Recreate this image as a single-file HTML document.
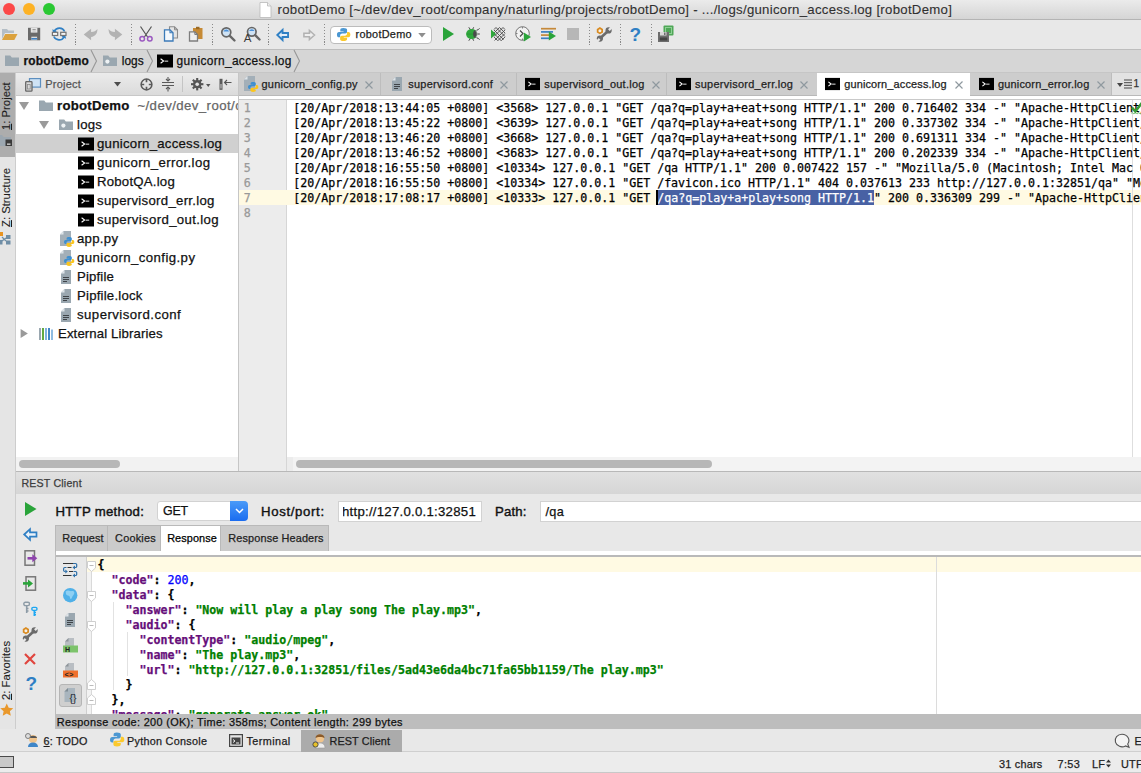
<!DOCTYPE html>
<html>
<head>
<meta charset="utf-8">
<title>robotDemo</title>
<style>
*{box-sizing:border-box;margin:0;padding:0}
html,body{width:1141px;height:773px;overflow:hidden;background:#ececec}
body{font-family:"Liberation Sans",sans-serif;font-size:13px;color:#1d1d1d;position:relative;-webkit-text-stroke:0.25px}
.abs{position:absolute}
.nw{white-space:nowrap}
.mono{font-family:"DejaVu Sans Mono","Liberation Mono",monospace}
svg{position:absolute;overflow:visible}
#titlebar{left:0;top:0;width:1141px;height:20px;background:linear-gradient(#ebebeb,#d5d5d5);border-bottom:1px solid #b4b4b4}
.tl{position:absolute;top:3px;width:12px;height:12px;border-radius:50%}
#title{left:277.500px;top:1.800px;font-size:14px;line-height:15px;color:#303030;white-space:nowrap;-webkit-text-stroke:0.1px}
#toolbar{left:0;top:20px;width:1141px;height:30px;background:#e8e8e8;border-bottom:1px solid #bdbdbd}
.sep{position:absolute;top:3.500px;width:1.200px;height:22px;background:repeating-linear-gradient(#8a8a8a 0,#8a8a8a 1.100px,transparent 1.100px,transparent 2.900px)}
#navbar{left:0;top:50px;width:1141px;height:23px;background:#d6d6d6;border-bottom:1px solid #c6c6c6;font-size:14px}
#leftstrip{left:0;top:73px;width:16px;height:656px;background:#e5e5e5;border-right:1px solid #cdcdcd}
#projhead{left:16px;top:73px;width:222px;height:23px;background:linear-gradient(#ebebeb,#dbdbdb);border-bottom:1px solid #c8c8c8}
#tree{left:16px;top:96px;width:222px;height:361px;background:#fff;overflow:hidden}
#projscroll{left:16px;top:457px;width:222px;height:14px;background:#f2f2f2}
#vsplit{left:238px;top:73px;width:1px;height:398px;background:#c6c6c6}
#tabs{left:240px;top:73px;width:901px;height:24px;background:#d4d4d4;border-bottom:1px solid #b9b9b9}
#gutter{left:240px;top:97px;width:48px;height:374px;background:#f0f0f0;border-right:1px solid #d9d9d9}
#editor{left:288px;top:97px;width:853px;height:360px;background:#fff;overflow:hidden}
#edscroll{left:293px;top:457px;width:848px;height:14px;background:#f3f3f3}
#resthead{left:16px;top:471px;width:1125px;height:23px;background:linear-gradient(#dcdcdc,#cfcfcf);border-top:1px solid #b5b5b5;border-bottom:1px solid #bcbcbc}
#restbody{left:16px;top:494px;width:1125px;height:235px;background:#e8e8e8}
#bottomstrip{left:0;top:729px;width:1141px;height:23px;background:#e8e8e8;border-top:1px solid #c4c4c4;border-bottom:1px solid #c9c9c9}
#statusbar{left:0;top:752px;width:1141px;height:21px;background:#ececec}
</style>
</head>
<body>
<svg width="0" height="0" style="position:absolute">
<defs>
  <symbol id="i-folder" viewBox="0 0 16 16"><path d="M1 2.5h5.2l1.6 2H15V13H1z" fill="#9aa7b0"/></symbol>
  <symbol id="i-folderdot" viewBox="0 0 16 16"><path d="M1 2.5h5.2l1.6 2H15V13H1z" fill="#9aa7b0"/><circle cx="5.4" cy="8.600" r="2.100" fill="#eef2f4"/></symbol>
  <symbol id="i-term" viewBox="0 0 16 16"><rect x="0" y="1.5" width="16" height="13" fill="#000"/><path d="M3.6 5.8l3 2.2-3 2.2" stroke="#fff" stroke-width="1.1" fill="none"/><rect x="7.6" y="7.6" width="3.6" height="1.1" fill="#d8d8d8"/></symbol>
  <symbol id="i-py" viewBox="0 0 16 16"><path d="M3.500 0H11V15H0V3.500z" fill="#a3afb8"/><path d="M3.500 0V3.500H0z" fill="#dfe5e9"/><g transform="translate(3.300,5.200) scale(0.72)"><path d="M7.800 1C5.500 1 4.600 1.800 4.600 3v1.800h3.500v.6H3.200C1.800 5.400 1 6.500 1 8.200s.8 2.800 2.200 2.800h1.200V9.200c0-1.300 1-2.300 2.300-2.300h3.300c1 0 1.800-.8 1.800-1.800V3c0-1.200-1.200-2-4-2z" fill="#3e8fd0"/><path d="M11.800 5.200v1.700c0 1.400-1 2.400-2.300 2.400H6.200c-1 0-1.800.8-1.800 1.800V13c0 1.200 1.200 2 3.600 2s3.800-.8 3.800-2v-1.600H8.300v-.6h5c1.300 0 2-1.100 2-2.800s-.7-2.800-2-2.800z" fill="#fbc51c"/></g></symbol>
  <symbol id="i-txt" viewBox="0 0 16 16"><path d="M6.500 1H13V15H3V4.500z" fill="#9aa7b0"/><path d="M6.500 1V4.500H3z" fill="#dfe5e9"/><path d="M5 8.500h6M5 10.500h6M5 12.500h4" stroke="#3f4449" stroke-width="1"/></symbol>
</defs>
</svg>
<div id="titlebar" class="abs">
  <div class="tl" style="left:3px;background:#fc4948"></div>
  <div class="tl" style="left:23px;background:#fdb225"></div>
  <div class="tl" style="left:43px;background:#2ac833"></div>
  <svg style="left:259px;top:2px" width="13" height="16" viewBox="0 0 13 16"><path d="M1 .5h7.500l3.500 3.500V15.500H1z" fill="#fff" stroke="#b9b9b9" stroke-width=".8"/><path d="M8.500.5v3.500H12" fill="#eee" stroke="#b9b9b9" stroke-width=".8"/></svg>
  <div id="title" class="abs">robotDemo [~/dev/dev_root/company/naturling/projects/robotDemo] - .../logs/gunicorn_access.log [robotDemo]</div>
</div>
<style>
#title{font-size:13.20px!important;letter-spacing:0.282px!important}
#cmb{font-size:10.90px!important;letter-spacing:0.281px!important}
#nv1{font-size:11.90px!important;letter-spacing:0.231px!important}
#nv2{font-size:11.90px!important;letter-spacing:0.068px!important}
#nv3{font-size:11.90px!important;letter-spacing:0.352px!important}
#projlbl{font-size:11.00px!important;letter-spacing:0.221px!important}
#tr0{font-size:13.20px!important;letter-spacing:0.251px!important}
#tl1{font-size:13.20px!important;letter-spacing:0.249px!important}
#tl2{font-size:13.20px!important;letter-spacing:0.256px!important}
#tl3{font-size:13.20px!important;letter-spacing:0.394px!important}
#tl4{font-size:13.20px!important;letter-spacing:0.226px!important}
#tl5{font-size:13.20px!important;letter-spacing:0.292px!important}
#tl6{font-size:13.20px!important;letter-spacing:0.363px!important}
#tl7{font-size:13.20px!important;letter-spacing:0.282px!important}
#tl8{font-size:13.20px!important;letter-spacing:0.428px!important}
#tl9{font-size:13.20px!important;letter-spacing:0.154px!important}
#tl10{font-size:13.20px!important;letter-spacing:0.213px!important}
#tl11{font-size:13.20px!important;letter-spacing:0.465px!important}
#tl12{font-size:13.20px!important;letter-spacing:0.110px!important}
#tb1{font-size:10.95px!important;letter-spacing:0.243px!important}
#tb2{font-size:10.95px!important;letter-spacing:0.297px!important}
#tb3{font-size:10.95px!important;letter-spacing:0.260px!important}
#tb4{font-size:10.95px!important;letter-spacing:0.272px!important}
#tb5{font-size:10.95px!important;letter-spacing:0.152px!important}
#tb6{font-size:10.95px!important;letter-spacing:0.174px!important}
#rhl{font-size:10.60px!important;letter-spacing:0.210px!important}
#fl1{font-size:13.20px!important;letter-spacing:0.257px!important}
#fget{font-size:12.40px!important;letter-spacing:-0.161px!important}
#fl2{font-size:13.20px!important;letter-spacing:0.653px!important}
#fl3{font-size:13.20px!important;letter-spacing:0.141px!important}
#fpath{font-size:12.70px!important;letter-spacing:0.286px!important}
#bt1{font-size:10.80px!important;letter-spacing:0.196px!important}
#bt2{font-size:10.80px!important;letter-spacing:0.283px!important}
#bt3{font-size:10.80px!important;letter-spacing:0.423px!important}
#bt4{font-size:10.80px!important;letter-spacing:0.126px!important}
#st1{font-size:10.90px!important;letter-spacing:0.215px!important}
#st2{font-size:10.90px!important;letter-spacing:0.374px!important}
#st3{font-size:10.90px!important;letter-spacing:0.241px!important}
#rstat{font-size:10.90px!important;letter-spacing:0.342px!important}
#rt1{font-size:10.90px!important;letter-spacing:0.117px!important}
#rt2{font-size:10.90px!important;letter-spacing:0.206px!important}
#rt3{font-size:10.90px!important;letter-spacing:0.082px!important}
#rt4{font-size:10.90px!important;letter-spacing:0.129px!important}
#tr0b{font-size:13.20px!important;letter-spacing:0.434px!important}
</style>
<div id="toolbar" class="abs">
  <!-- open -->
  <svg style="left:2px;top:6px" width="16" height="16" viewBox="0 0 16 16"><path d="M0 3h5l1.300 1.600H12V7H3L0 13z" fill="#b4bec6"/><path d="M3.200 8H15.500l-3.200 6H0z" fill="#dba23e"/></svg>
  <!-- save -->
  <svg style="left:27px;top:6px" width="16" height="16" viewBox="0 0 16 16"><path d="M1 1.800h12.200v12.500H1z" fill="#6a6a6a"/><rect x="3.800" y="1.800" width="6.600" height="4.800" fill="#e4e4e4"/><rect x="5.500" y="3" width="3.200" height="1" fill="#9a9a9a"/><rect x="5.500" y="4.600" width="3.200" height=".800" fill="#b5b5b5"/><rect x="4.300" y="10.700" width="5.800" height="3.600" fill="#dcdcdc"/><rect x="4.300" y="12" width="5.800" height="1.600" fill="#3d7fc1"/></svg>
  <!-- sync -->
  <svg style="left:51px;top:6px" width="16" height="16" viewBox="0 0 16 16"><path d="M3.300 5.200A5.700 5.700 0 0 1 13.600 5.500" stroke="#2f7fc4" stroke-width="1.600" fill="none"/><path d="M1.300 3.200l1 4.200 3.600-2.200z" fill="#2f7fc4"/><path d="M13.100 10.800A5.700 5.700 0 0 1 2.800 10.500" stroke="#2f7fc4" stroke-width="1.600" fill="none"/><path d="M15.100 12.800l-1-4.200-3.600 2.200z" fill="#2f7fc4"/><rect x="1.400" y="6.300" width="5.300" height="3.200" fill="#f4f4f4" stroke="#737373" stroke-width="1.200"/><rect x="9.700" y="6.300" width="5.300" height="3.200" fill="#f4f4f4" stroke="#737373" stroke-width="1.200"/></svg>
  <div class="sep" style="left:75px"></div>
  <!-- undo -->
  <svg style="left:83px;top:6px" width="16" height="16" viewBox="0 0 16 16"><path d="M.700 8.500L8.100 2.800V6C11 6 13 5 14.400 3 14.600 7 12.500 10.500 8.100 11V14.200z" fill="#b3b3b3"/></svg>
  <!-- redo -->
  <svg style="left:107px;top:6px" width="16" height="16" viewBox="0 0 16 16"><g transform="translate(16,0) scale(-1,1)"><path d="M.700 8.500L8.100 2.800V6C11 6 13 5 14.400 3 14.600 7 12.500 10.500 8.100 11V14.200z" fill="#b3b3b3"/></g></svg>
  <div class="sep" style="left:131px"></div>
  <!-- cut -->
  <svg style="left:138px;top:6px" width="16" height="16" viewBox="0 0 16 16"><path d="M2.500.500L9.600 11M13.500.500L6.400 11" stroke="#555" stroke-width="1.200" fill="none"/><circle cx="4.200" cy="12.800" r="2.300" fill="none" stroke="#9b59c0" stroke-width="1.500"/><circle cx="11.800" cy="12.800" r="2.300" fill="none" stroke="#9b59c0" stroke-width="1.500"/></svg>
  <!-- copy -->
  <svg style="left:163px;top:6px" width="16" height="16" viewBox="0 0 16 16"><path d="M6.500.800h5l3 3V12H6.500z" fill="#e4e4e4" stroke="#8a8a8a" stroke-width="1.100"/><path d="M11.500.800v3h3" fill="none" stroke="#8a8a8a" stroke-width="1"/><path d="M1.500 3.800h5.500l3 3V15H1.500z" fill="#f4f8fc" stroke="#3b7ab8" stroke-width="1.300"/><path d="M7 3.800v3h3" fill="none" stroke="#3b7ab8" stroke-width="1.100"/></svg>
  <!-- paste -->
  <svg style="left:188px;top:6px" width="16" height="16" viewBox="0 0 16 16"><path d="M5 2h9.500v11H5z" fill="#c68a35"/><rect x="8" y=".800" width="3.500" height="2.400" fill="#9a6a25"/><path d="M1.500 5.800h5.300l2.700 2.700V15H1.500z" fill="#efefef" stroke="#7d7d7d" stroke-width="1.300"/><path d="M6.800 5.800v2.700h2.700" fill="none" stroke="#7d7d7d" stroke-width="1"/></svg>
  <div class="sep" style="left:211.700px"></div>
  <!-- find -->
  <svg style="left:220px;top:6px" width="16" height="16" viewBox="0 0 16 16"><circle cx="6.300" cy="6.300" r="4.500" fill="#cfe2f3" stroke="#666" stroke-width="1.700"/><path d="M3.500 5.500a3 3 0 0 1 5.600 0z" fill="#4a90d9"/><path d="M9.800 9.800L14.500 14.500" stroke="#666" stroke-width="2.400" stroke-linecap="round"/></svg>
  <!-- replace -->
  <svg style="left:244px;top:6px" width="17" height="16" viewBox="0 0 17 16"><circle cx="7.800" cy="5.800" r="4.300" fill="#cfe2f3" stroke="#666" stroke-width="1.700"/><path d="M5.100 5a3 3 0 0 1 5.400 0z" fill="#4a90d9"/><path d="M11.200 9.200L15.500 13.500" stroke="#666" stroke-width="2.400" stroke-linecap="round"/><text x="-0.300" y="16" font-family="Liberation Sans,sans-serif" font-size="11.500" fill="#3a3a3a" style="-webkit-text-stroke:0">A</text></svg>
  <div class="sep" style="left:267.700px"></div>
  <!-- back -->
  <svg style="left:276px;top:7.500px" width="14" height="14" viewBox="0 0 16 16"><path d="M1.500 8L7.500 2.300V5.700H13.800V10.300H7.500V13.700z" fill="#e4eef8" stroke="#2f7fc4" stroke-width="2.100" stroke-linejoin="miter"/></svg>
  <!-- forward -->
  <svg style="left:301.500px;top:7.500px" width="14" height="14" viewBox="0 0 16 16"><path d="M14.300 8L8.500 2.800V6H2.200V10H8.500V13.200z" fill="#efefef" stroke="#b2b2b2" stroke-width="1.800"/></svg>
  <div class="sep" style="left:323.800px"></div>
  <!-- combo -->
  <div class="abs" style="left:329.500px;top:5.500px;width:102px;height:18.500px;background:#fff;border:1px solid #bcbcbc;border-radius:4px"></div>
  <svg style="left:335.500px;top:7px" width="15" height="15" viewBox="0 0 16 16"><path d="M7.800 1C5.500 1 4.600 1.800 4.600 3v1.800h3.500v.6H3.200C1.800 5.400 1 6.500 1 8.200s.8 2.800 2.200 2.800h1.200V9.200c0-1.300 1-2.300 2.300-2.300h3.300c1 0 1.800-.8 1.800-1.800V3c0-1.200-1.200-2-4-2z" fill="#4b97d2"/><path d="M11.800 5.200v1.700c0 1.400-1 2.400-2.300 2.400H6.200c-1 0-1.800.8-1.800 1.800V13c0 1.200 1.200 2 3.600 2s3.800-.8 3.800-2v-1.600H8.300v-.6h5c1.300 0 2-1.100 2-2.800s-.7-2.800-2-2.800z" fill="#fbc92d"/></svg>
  <div class="abs nw" id="cmb" style="left:355.500px;top:8px;line-height:13px;font-size:12px;color:#1d1d1d">robotDemo</div>
  <svg style="left:417.500px;top:13px" width="8" height="5" viewBox="0 0 9 6"><path d="M0 0h9L4.500 5.500z" fill="#8e8e8e"/></svg>
  <!-- run -->
  <svg style="left:440px;top:6px" width="16" height="16" viewBox="0 0 16 16"><path d="M3 1l11 7-11 7z" fill="#2aa43a"/></svg>
  <!-- debug -->
  <svg style="left:465px;top:6px" width="16" height="16" viewBox="0 0 16 16"><path d="M3.800 1.300l1.800 2.500M8.700 1.300L7.500 3.500M3.800 14.700l1.800-2.500M8.700 14.700L7.500 12.500" stroke="#444" stroke-width="1" fill="none"/><path d="M11.500 4.300c1.500-.3 2.500-1 3-2M11.500 11.700c1.500.3 2.500 1 3 2M12 8h2.800" stroke="#444" stroke-width="1" fill="none"/><ellipse cx="6.700" cy="8.100" rx="5.600" ry="5" fill="#2fa73c"/><path d="M1.500 8.100h7" stroke="#258c31" stroke-width=".6"/><path d="M10 4.100a5 5 0 0 1 0 8c-1.300-1-1.900-2.400-1.900-4s.6-3 1.900-4z" fill="#4a4a4a"/><path d="M11 5.200a4 4 0 0 1 0 5.800" stroke="#bbb" stroke-width=".8" fill="none"/></svg>
  <!-- coverage -->
  <svg style="left:489px;top:6px" width="17" height="16" viewBox="0 0 17 16"><path d="M5 1.500h11v7.500c0 3-2.500 5-5.500 6-3-1-5.500-3-5.500-6z" fill="#e2e2e2"/><g stroke="#4d4d4d" stroke-width=".9"><path d="M5 4l9.500 9.500M5 7.500l7.500 7.500M5 11l3.500 3.500M7 1.500l9 9M10.500 1.500l5.500 5.500M14 1.500l2 2"/><path d="M16 4l-10.500 10.500M16 7.500l-7.500 7.500M16 11l-3.500 3.500M14 1.500l-9 9M10.500 1.500l-5.500 5.500M7 1.500l-2 2"/></g><path d="M2 3.500L7 8 2 12.500z" fill="#2fa73c"/></svg>
  <!-- profile -->
  <svg style="left:515px;top:6px" width="17" height="16" viewBox="0 0 17 16"><circle cx="7.500" cy="7.500" r="6.800" fill="#f2f2f2" stroke="#666" stroke-width=".9"/><path d="M7.500 1v1.500M1 7.500h1.500M7.500 14v-1.500" stroke="#666" stroke-width=".8"/><path d="M5 4.500l3 3-3 3" stroke="#444" stroke-width="1.100" fill="none"/><path d="M8.800 6.500L16 11l-7.200 4.500z" fill="#2aa43a"/></svg>
  <!-- concurrency -->
  <svg style="left:540px;top:6px" width="17" height="16" viewBox="0 0 17 16"><path d="M1 2.700h15" stroke="#c5893a" stroke-width="1.700"/><path d="M1 5.900h12" stroke="#3d7fc1" stroke-width="1.700"/><path d="M1 9.100h8" stroke="#c5893a" stroke-width="1.700"/><path d="M1 12.300h8" stroke="#3d7fc1" stroke-width="1.700"/><path d="M8.800 5.500L16 10l-7.200 4.500z" fill="#2aa43a"/></svg>
  <!-- stop -->
  <div class="abs" style="left:567px;top:8px;width:12px;height:12px;background:#b7b7b7"></div>
  <div class="sep" style="left:589px"></div>
  <!-- wrench -->
  <svg style="left:596px;top:6px" width="16" height="16" viewBox="0 0 16 16"><path d="M4.200 12.300L12.300 4.700" stroke="#6b6b6b" stroke-width="2.600"/><circle cx="12.600" cy="4.400" r="3.100" fill="#6b6b6b"/><path d="M12.900 4.100L16.500.500" stroke="#e8e8e8" stroke-width="2.300"/><circle cx="3.900" cy="12.600" r="3.100" fill="#6b6b6b"/><path d="M3.600 12.900L0 16.500" stroke="#e8e8e8" stroke-width="2.300"/><path d="M3.900 1.100l3.100 1.800v3.600l-3.100 1.800-3.100-1.800V2.900z" fill="#d98a1f"/><circle cx="3.900" cy="4.700" r="1.500" fill="#f3f0ea"/></svg>
  <div class="sep" style="left:620px"></div>
  <!-- help -->
  <div class="abs nw" style="left:629.500px;top:3px;font-size:19px;font-weight:bold;color:#2f7fc4;line-height:24px;-webkit-text-stroke:0">?</div>
  <div class="sep" style="left:651px"></div>
  <!-- project structure -->
  <svg style="left:657px;top:5px" width="18" height="18" viewBox="0 0 18 18"><rect x="6.500" y=".500" width="10" height="10" rx="1" fill="#4fa757"/><rect x="8.500" y="2.500" width="6" height="6" fill="none" stroke="#8fd095" stroke-width="1"/><path d="M1 7h11v10H1z" fill="#6d6d6d"/><rect x="3" y="7" width="6.500" height="3.500" fill="#d8d8d8"/><rect x="7" y="7.500" width="1.500" height="2.500" fill="#6d6d6d"/><rect x="2.800" y="12.500" width="7.500" height="3" fill="#444"/></svg>
</div>
<div id="navbar" class="abs">
  <svg style="left:4px;top:3px" width="16" height="16"><use href="#i-folder"/></svg>
  <div class="abs nw" id="nv1" style="left:23.500px;top:4px;font-weight:bold;color:#111">robotDemo</div>
  <svg style="left:90px;top:0" width="8" height="22" viewBox="0 0 8 23" preserveAspectRatio="none"><path d="M1 0l5.500 11.500L1 23" stroke="#979797" stroke-width="1.100" fill="none"/></svg>
  <svg style="left:102px;top:3px" width="16" height="16"><use href="#i-folderdot"/></svg>
  <div class="abs nw" id="nv2" style="left:121.700px;top:4px;color:#111">logs</div>
  <svg style="left:146px;top:0" width="8" height="22" viewBox="0 0 8 23" preserveAspectRatio="none"><path d="M1 0l5.500 11.500L1 23" stroke="#979797" stroke-width="1.100" fill="none"/></svg>
  <svg style="left:157px;top:3px" width="16" height="16"><use href="#i-term"/></svg>
  <div class="abs nw" id="nv3" style="left:176.500px;top:4px;color:#111">gunicorn_access.log</div>
  <svg style="left:293px;top:0" width="8" height="22" viewBox="0 0 8 23" preserveAspectRatio="none"><path d="M1 0l5.500 11.500L1 23" stroke="#979797" stroke-width="1.100" fill="none"/></svg>
</div>
<style>
.vtab{position:absolute;left:0;width:15px;font-size:11.300px;color:#1d1d1d}
.vtext{position:absolute;left:-1.200px;-webkit-text-stroke:0.1px;white-space:nowrap;transform-origin:0 0;transform:rotate(-90deg);line-height:15px;height:15px}
.row{position:absolute;left:0;width:222px;height:19px}
.row .lbl{position:absolute;top:1.200px;font-size:14px;line-height:17px;white-space:nowrap;color:#111;}
.row svg{top:1px}
.hdric{stroke:#5a5a5a;fill:none}
</style>
<div id="leftstrip" class="abs">
  <div class="vtab" style="top:-0.500px;height:84px;background:#adadad">
    <div class="vtext" id="vt1" style="top:57.500px"><u>1</u>: Project</div>
    <svg style="left:-3px;top:61.500px" width="16" height="13" viewBox="0 0 16 13"><path d="M0 1h5l1.500 2H14v9H0z" fill="#97a5b1" opacity=".75"/><rect x="8.500" y="5.500" width="6.500" height="6.500" fill="#3a3a3a"/><rect x="10" y="9.500" width="3.500" height="1.300" fill="#d8d8d8"/></svg>
  </div>
  <div class="vtab" style="top:88px;height:90px">
    <div class="vtext" id="vt2" style="top:65.500px"><u>Z</u>: Structure</div>
    <svg style="left:-2px;top:70.500px" width="14" height="13" viewBox="0 0 14 13"><rect x="0" y="0" width="5" height="4" fill="#e8931f"/><rect x="0" y="8" width="4.500" height="4.500" fill="#6f8ea6"/><rect x="8" y="3" width="4.500" height="4" fill="#6f8ea6"/><rect x="8" y="8.500" width="4.500" height="4" fill="#6f8ea6"/><path d="M4 5l4 4M8 6l-4 3" stroke="#6f8ea6" stroke-width="1.200"/></svg>
  </div>
  <div class="vtab" style="top:560px;height:96px">
    <div class="vtext" id="vt3" style="top:66.500px"><u>2</u>: Favorites</div>
    <svg style="left:-0.500px;top:70px" width="13.500" height="13.500" viewBox="0 0 16 16"><path d="M8 .500l2.300 5 5.400.600-4 3.700 1.100 5.400L8 12.500 3.200 15.200l1.100-5.400-4-3.700 5.400-.600z" fill="#e9982b"/></svg>
  </div>
</div>
<div id="projhead" class="abs">
  <svg style="left:9px;top:5px" width="16" height="14" viewBox="0 0 16 14"><rect x="4.500" y=".600" width="11" height="8.500" fill="#cfe3f5" stroke="#5d8fbf" stroke-width="1.200"/><rect x=".700" y="3.700" width="6.300" height="9.500" rx=".800" fill="#d9d9d9" stroke="#666" stroke-width="1.300"/><rect x="2.500" y="6.500" width="2.700" height="4.500" fill="none" stroke="#8a8a8a" stroke-width=".8"/></svg>
  <div class="abs nw" style="left:29.200px;top:5px;font-size:13px;color:#555" id="projlbl">Project</div>
  <svg style="left:98px;top:9px" width="7" height="5" viewBox="0 0 7 5"><path d="M0 0h7L3.500 4.500z" fill="#4d4d4d"/></svg>
  <svg style="left:124px;top:5px" width="13" height="13" viewBox="0 0 13 13" class="hdric"><circle cx="6.500" cy="6.500" r="5.400" stroke-width="1.500"/><path d="M6.500 1v3.200M6.500 8.800v3.200M1 6.500h3.200M8.800 6.500h3.200" stroke-width="1.700"/></svg>
  <svg style="left:146px;top:4px" width="12" height="15" viewBox="0 0 12 15" class="hdric"><path d="M0 5.500h12M0 8.500h12" stroke-width="1"/><path d="M6 0v4M6 10v4.500" stroke-width="1.100"/><path d="M4 2l2 2 2-2M4 12l2-2 2 2" stroke-width="1.100"/></svg>
  <div class="abs" style="left:166px;top:3px;width:1px;height:16px;background:#c4c4c4"></div>
  <svg style="left:175px;top:5px" width="12.400" height="12.400" viewBox="0 0 13 13"><g fill="#555"><circle cx="6.500" cy="6.500" r="4.300"/><g id="gt"><rect x="5.400" y="0" width="2.200" height="13"/></g><use href="#gt" transform="rotate(45 6.500 6.500)"/><use href="#gt" transform="rotate(90 6.500 6.500)"/><use href="#gt" transform="rotate(135 6.500 6.500)"/></g><circle cx="6.500" cy="6.500" r="1.900" fill="#e1e1e1"/></svg>
  <svg style="left:189.500px;top:10.500px" width="4.500" height="3.500" viewBox="0 0 5 4"><path d="M0 0h5L2.500 3.500z" fill="#555"/></svg>
  <svg style="left:202.800px;top:5px" width="13" height="13" viewBox="0 0 13 13"><rect x=".500" y=".800" width="3" height="11" fill="#5a5a5a"/><rect x="1.500" y="6" width="1" height="4.500" fill="#d0d0d0"/><path d="M12.500 4.500H5.500M8 2L5.500 4.500 8 7" stroke="#555" stroke-width="1.100" fill="none"/></svg>
</div>
<div id="tree" class="abs">
  <div class="row" style="top:0">
    <svg style="left:3px;top:6px" width="10" height="8" viewBox="0 0 10 8"><path d="M0 0h10L5 8z" fill="#9a9a9a"/></svg>
    <svg style="left:22px;top:2px" width="16" height="16"><use href="#i-folder"/></svg>
    <div class="lbl" style="left:41px;font-weight:bold" id="tr0">robotDemo</div>
    <div class="lbl" style="left:121.400px;color:#666;font-size:13.200px;letter-spacing:0.434px" id="tr0c"><span id="tr0b">~/dev/dev_root</span>/company/naturling</div>
  </div>
  <div class="row" style="top:19px">
    <svg style="left:23px;top:6px" width="10" height="8" viewBox="0 0 10 8"><path d="M0 0h10L5 8z" fill="#9a9a9a"/></svg>
    <svg style="left:42px;top:2px" width="16" height="16"><use href="#i-folderdot"/></svg>
    <div class="lbl" id="tl1" style="left:61px">logs</div>
  </div>
  <div class="row" style="top:38px;background:#d0d0d0">
    <svg style="left:62px;top:2px" width="16" height="16"><use href="#i-term"/></svg>
    <div class="lbl" id="tl2" style="left:81px">gunicorn_access.log</div>
  </div>
  <div class="row" style="top:57px">
    <svg style="left:62px;top:2px" width="16" height="16"><use href="#i-term"/></svg>
    <div class="lbl" id="tl3" style="left:81px">gunicorn_error.log</div>
  </div>
  <div class="row" style="top:76px">
    <svg style="left:62px;top:2px" width="16" height="16"><use href="#i-term"/></svg>
    <div class="lbl" id="tl4" style="left:81px">RobotQA.log</div>
  </div>
  <div class="row" style="top:95px">
    <svg style="left:62px;top:2px" width="16" height="16"><use href="#i-term"/></svg>
    <div class="lbl" id="tl5" style="left:81px">supervisord_err.log</div>
  </div>
  <div class="row" style="top:114px">
    <svg style="left:62px;top:2px" width="16" height="16"><use href="#i-term"/></svg>
    <div class="lbl" id="tl6" style="left:81px">supervisord_out.log</div>
  </div>
  <div class="row" style="top:133px">
    <svg style="left:43.700px;top:2px" width="16" height="16"><use href="#i-py"/></svg>
    <div class="lbl" id="tl7" style="left:61px">app.py</div>
  </div>
  <div class="row" style="top:152px">
    <svg style="left:43.700px;top:2px" width="16" height="16"><use href="#i-py"/></svg>
    <div class="lbl" id="tl8" style="left:61px">gunicorn_config.py</div>
  </div>
  <div class="row" style="top:171px">
    <svg style="left:42.200px;top:2px" width="16" height="16"><use href="#i-txt"/></svg>
    <div class="lbl" id="tl9" style="left:61px">Pipfile</div>
  </div>
  <div class="row" style="top:190px">
    <svg style="left:42.200px;top:2px" width="16" height="16"><use href="#i-txt"/></svg>
    <div class="lbl" id="tl10" style="left:61px">Pipfile.lock</div>
  </div>
  <div class="row" style="top:209px">
    <svg style="left:42.200px;top:2px" width="16" height="16"><use href="#i-txt"/></svg>
    <div class="lbl" id="tl11" style="left:61px">supervisord.conf</div>
  </div>
  <div class="row" style="top:228px">
    <svg style="left:4px;top:5px" width="8.500" height="9" viewBox="0 0 8 10"><path d="M0 0v10l8-5z" fill="#9a9a9a"/></svg>
    <svg style="left:23px;top:3.500px" width="15" height="12" viewBox="0 0 15 12"><rect x="0" y="0" width="2" height="12" fill="#9aa7b0"/><rect x="3" y="0" width="2" height="12" fill="#62a940"/><rect x="6" y="0" width="2" height="12" fill="#7fb2dd"/><rect x="9" y="0" width="2" height="12" fill="#3f86c6"/><rect x="12" y="1.500" width="2" height="10.500" fill="#8fbce2"/></svg>
    <div class="lbl" id="tl12" style="left:42px">External Libraries</div>
  </div>
</div>
<div id="projscroll" class="abs"><div class="abs" style="left:3px;top:3px;width:101px;height:8px;border-radius:4px;background:#b7b7b7"></div></div>
<div id="vsplit" class="abs"></div>
<style>
#tabs{left:239px;top:73px;width:902px;height:27px;background:#fff;border:0}
#tabs .bar{position:absolute;left:0;top:0;width:902px;height:23px;background:#cdcdcd;border-bottom:1px solid #b9b9b9}
.tab{position:absolute;top:0;height:22px;border-right:1px solid #bdbdbd;font-size:11.600px;color:#222}
.tab .tl2{position:absolute;top:4px;white-space:nowrap;line-height:14px}
.tab svg.ic{top:3px}
.tab svg.x{top:8px}
.tab.act{background:#fff;height:27px;border-right:0}
#gutter{left:239px;top:100px;width:48px;height:371px;background:#ececec;border-right:1px solid #d6d6d6}
#editor{left:287px;top:100px;width:854px;height:357px;background:#fff;overflow:hidden}
.ln{position:absolute;left:4.800px;margin-top:1px;font-size:11.639px;line-height:15px;color:#999;height:15px}
.cl{position:absolute;left:6.200px;margin-top:1px;height:15px;line-height:15px;font-size:11.639px;color:#000;white-space:pre}
</style>
<div id="tabs" class="abs">
  <div class="bar"></div>
  <div class="tab" style="left:0px;width:141.5px">
    <svg class="ic" style="left:4.9px" width="16" height="16"><use href="#i-py"/></svg>
    <div class="tl2" id="tb1" style="left:22.5px">gunicorn_config.py</div>
    <svg class="x" style="left:125.8px" width="8" height="8" viewBox="0 0 8 8"><path d="M.500.500l7 7M7.500.500l-7 7" stroke="#8f999f" stroke-width="1.150"/></svg>
  </div>
  <div class="tab" style="left:141.5px;width:136.5px">
    <svg class="ic" style="left:8.2px" width="16" height="16"><use href="#i-txt"/></svg>
    <div class="tl2" id="tb2" style="left:27.7px">supervisord.conf</div>
    <svg class="x" style="left:119.8px" width="8" height="8" viewBox="0 0 8 8"><path d="M.500.500l7 7M7.500.500l-7 7" stroke="#8f999f" stroke-width="1.150"/></svg>
  </div>
  <div class="tab" style="left:278px;width:150px">
    <svg class="ic" style="left:8.4px" width="15" height="16"><use href="#i-term"/></svg>
    <div class="tl2" id="tb3" style="left:27.2px">supervisord_out.log</div>
    <svg class="x" style="left:134.6px" width="8" height="8" viewBox="0 0 8 8"><path d="M.500.500l7 7M7.500.500l-7 7" stroke="#8f999f" stroke-width="1.150"/></svg>
  </div>
  <div class="tab" style="left:428px;width:150px;border-right:0">
    <svg class="ic" style="left:9px" width="15" height="16"><use href="#i-term"/></svg>
    <div class="tl2" id="tb4" style="left:28px">supervisord_err.log</div>
    <svg class="x" style="left:133.2px" width="8" height="8" viewBox="0 0 8 8"><path d="M.500.500l7 7M7.500.500l-7 7" stroke="#8f999f" stroke-width="1.150"/></svg>
  </div>
  <div class="tab act" style="left:578px;width:153px">
    <svg class="ic" style="left:8.3px" width="15" height="16"><use href="#i-term"/></svg>
    <div class="tl2" id="tb5" style="left:27.2px">gunicorn_access.log</div>
    <svg class="x" style="left:137.5px" width="8" height="8" viewBox="0 0 8 8"><path d="M.500.500l7 7M7.500.500l-7 7" stroke="#8f999f" stroke-width="1.150"/></svg>
  </div>
  <div class="tab" style="left:731px;width:142.3px">
    <svg class="ic" style="left:9.1px" width="15" height="16"><use href="#i-term"/></svg>
    <div class="tl2" id="tb6" style="left:28.1px">gunicorn_error.log</div>
    <svg class="x" style="left:126.8px" width="8" height="8" viewBox="0 0 8 8"><path d="M.500.500l7 7M7.500.500l-7 7" stroke="#8f999f" stroke-width="1.150"/></svg>
  </div>
  <div class="abs" style="left:873.300px;top:0;width:29px;height:23px;background:#e2e2e2;border-bottom:1px solid #b9b9b9"></div>
  <svg style="left:878px;top:10px" width="6" height="4" viewBox="0 0 6 4"><path d="M0 0h6L3 4z" fill="#444"/></svg>
  <svg style="left:885px;top:6px" width="8" height="10" viewBox="0 0 8 10"><path d="M0 1h8M0 3.700h8M0 6.300h8M0 9h8" stroke="#444" stroke-width="1"/></svg>
  <div class="abs" style="left:894.500px;top:5px;font-size:10px;color:#333">1</div>
  <div class="abs" style="left:0;top:26px;width:902px;height:1px;background:#c9c9c9"></div>
</div>
<div id="gutter" class="abs mono">
  <div class="abs" style="left:0;top:90px;width:48px;height:15px;background:#fffae3"></div>
  <div class="ln" style="top:0">1</div>
  <div class="ln" style="top:15px">2</div>
  <div class="ln" style="top:30px">3</div>
  <div class="ln" style="top:45px">4</div>
  <div class="ln" style="top:60px">5</div>
  <div class="ln" style="top:75px">6</div>
  <div class="ln" style="top:90px">7</div>
  <div class="ln" style="top:105px">8</div>
</div>
<div id="editor" class="abs mono">
  <div class="abs" style="left:0;top:90px;width:853px;height:15px;background:#fffae3"></div>
  <div class="abs" style="left:844.500px;top:0;width:1px;height:357px;background:#dedede"></div>
  <div class="cl" style="top:0">[20/Apr/2018:13:44:05 +0800] &lt;3568&gt; 127.0.0.1 "GET /qa?q=play+a+eat+song HTTP/1.1" 200 0.716402 334 -" "Apache-HttpClient/4.5.2 (Java/1.8.0_152-release)"</div>
  <div class="cl" style="top:15px">[20/Apr/2018:13:45:22 +0800] &lt;3639&gt; 127.0.0.1 "GET /qa?q=play+a+eat+song HTTP/1.1" 200 0.337302 334 -" "Apache-HttpClient/4.5.2 (Java/1.8.0_152-release)"</div>
  <div class="cl" style="top:30px">[20/Apr/2018:13:46:20 +0800] &lt;3668&gt; 127.0.0.1 "GET /qa?q=play+a+eat+song HTTP/1.1" 200 0.691311 334 -" "Apache-HttpClient/4.5.2 (Java/1.8.0_152-release)"</div>
  <div class="cl" style="top:45px">[20/Apr/2018:13:46:52 +0800] &lt;3683&gt; 127.0.0.1 "GET /qa?q=play+a+eat+song HTTP/1.1" 200 0.202339 334 -" "Apache-HttpClient/4.5.2 (Java/1.8.0_152-release)"</div>
  <div class="cl" style="top:60px">[20/Apr/2018:16:55:50 +0800] &lt;10334&gt; 127.0.0.1 "GET /qa HTTP/1.1" 200 0.007422 157 -" "Mozilla/5.0 (Macintosh; Intel Mac OS X 10_13_4) AppleWebKit/537.36"</div>
  <div class="cl" style="top:75px">[20/Apr/2018:16:55:50 +0800] &lt;10334&gt; 127.0.0.1 "GET /favicon.ico HTTP/1.1" 404 0.037613 233 http://127.0.0.1:32851/qa" "Mozilla/5.0 (Macintosh; Intel Mac OS X)"</div>
  <div class="cl" style="top:90px">[20/Apr/2018:17:08:17 +0800] &lt;10333&gt; 127.0.0.1 "GET <span style="background:#4861a4;color:#fff;display:inline-block;height:15px;margin-top:-1px;padding-top:1px;vertical-align:top">/qa?q=play+a+play+song HTTP/1.1</span>" 200 0.336309 299 -" "Apache-HttpClient/4.5.2 (Java/1.8.0_152-release)"</div>
  <div class="abs" style="left:369px;top:90px;width:2px;height:15px;background:#000"></div>
  <svg style="left:843.500px;top:2px" width="12" height="12" viewBox="0 0 12 12"><path d="M1 5.500l3.300 4L11.500.300" stroke="#379b37" stroke-width="2.600" fill="none"/><path d="M.500 11.300q.8-1 1.600 0t1.600 0 1.600 0 1.600 0 1.600 0 1.600 0" stroke="#4fae4f" stroke-width=".8" fill="none"/></svg>
</div>
<div id="edscroll" class="abs"><div class="abs" style="left:3px;top:3px;width:416px;height:8px;border-radius:4px;background:#b7b7b7"></div></div>
<style>
#resthead{left:16px;top:471px;width:1125px;height:24px;background:linear-gradient(#e1e1e1,#d6d6d6);border-top:1px solid #b8b8b8;border-bottom:1px solid #c2c2c2}
#restbody{left:16px;top:494px;width:1125px;height:235px;background:#e8e8e8}
.flbl{-webkit-text-stroke:0.4px;position:absolute;top:504px;font-size:13.500px;line-height:16px;color:#111;white-space:nowrap}
.inp{position:absolute;top:500.500px;height:21px;background:#fff;border:1px solid #d2d2d2;font-size:13.500px;line-height:19px;white-space:nowrap;overflow:hidden;color:#111}
.rtab{position:absolute;top:525px;height:27.200px;background:#cbcbcb;border:1px solid #b9b9b9;border-left:0;font-size:12px;line-height:24px;color:#222;white-space:nowrap;text-align:center;padding-left:3px}
#jsoned{left:86px;top:557px;width:1055px;height:157px;background:#fff;overflow:hidden}
.jl{position:absolute;left:11.500px;margin-top:1px;height:15px;line-height:15px;font-size:11.628px;white-space:pre;color:#000;font-weight:bold}
.k{color:#660e7a;font-weight:bold}.s{color:#008000;font-weight:bold}.n{color:#0000ff;font-weight:normal}
.fm{left:1px}
</style>
<div id="resthead" class="abs"><div class="abs nw" id="rhl" style="left:5.400px;top:4px;font-size:12px;color:#3c3c3c;line-height:15px">REST Client</div></div>
<div id="restbody" class="abs"></div>
<!-- left toolbar -->
<svg style="left:24px;top:502px" width="13" height="14" viewBox="0 0 13 14"><path d="M1 0l11.500 7L1 14z" fill="#2aa43a"/></svg>
<svg style="left:23px;top:527px" width="15" height="15" viewBox="0 0 15 15"><path d="M1.200 7.500L7 2.200V5.300H13.500V9.700H7V12.800z" fill="#eaf2fa" stroke="#2f7fc4" stroke-width="1.700"/></svg>
<svg style="left:23px;top:550px" width="15" height="16" viewBox="0 0 15 16"><rect x="2" y=".800" width="9.500" height="14.400" fill="#e8e8e8" stroke="#777" stroke-width="1.500"/><path d="M4.500 8.300h6" stroke="#8e44ad" stroke-width="2.600"/><path d="M9.300 4.300l5 4-5 4z" fill="#8e44ad"/></svg>
<svg style="left:22px;top:575px" width="15" height="16" viewBox="0 0 15 16"><rect x="4" y="1.800" width="9.500" height="13.400" fill="#e8e8e8" stroke="#777" stroke-width="1.500"/><path d="M1 8.400h6" stroke="#2aa43a" stroke-width="2.600"/><path d="M6 4.400l5 4-5 4z" fill="#2aa43a"/></svg>
<svg style="left:23px;top:601px" width="15" height="15" viewBox="0 0 15 15"><rect x=".800" y="1.200" width="5.700" height="3.400" rx="1.500" fill="none" stroke="#8d9ba6" stroke-width="1.400"/><path d="M3.700 4.600v7.400M3.700 7.500h1.800M3.700 10h1.800" stroke="#8d9ba6" stroke-width="1.600"/><rect x="8.800" y="6.400" width="5.200" height="3" rx="1.400" fill="none" stroke="#1ea7f2" stroke-width="1.400"/><path d="M11.300 9.500v5.500M11.300 11.500h1.700M11.300 13.800h1.700" stroke="#1ea7f2" stroke-width="1.600"/></svg>
<svg style="left:22px;top:626px" width="16" height="16" viewBox="0 0 16 16"><path d="M4.200 12.300L12.300 4.700" stroke="#6b6b6b" stroke-width="2.600"/><circle cx="12.600" cy="4.400" r="3.100" fill="#6b6b6b"/><path d="M12.900 4.100L16.500.500" stroke="#e8e8e8" stroke-width="2.300"/><circle cx="3.900" cy="12.600" r="3.100" fill="#6b6b6b"/><path d="M3.600 12.900L0 16.500" stroke="#e8e8e8" stroke-width="2.300"/><path d="M3.900 1.100l3.100 1.800v3.600l-3.100 1.800-3.100-1.800V2.900z" fill="#d98a1f"/><circle cx="3.900" cy="4.700" r="1.500" fill="#f3f0ea"/></svg>
<svg style="left:24px;top:653px" width="12" height="12" viewBox="0 0 12 12"><path d="M1 1l10 10M11 1L1 11" stroke="#e0463f" stroke-width="2.200"/></svg>
<div class="abs nw" style="left:25.500px;top:672px;font-size:19px;font-weight:bold;color:#2f7fc4;line-height:24px;-webkit-text-stroke:0">?</div>
<div class="abs" style="left:55px;top:551px;width:1px;height:178px;background:#bdbdbd"></div>
<!-- form row -->
<div class="flbl" id="fl1" style="left:55.500px">HTTP method:</div>
<div class="inp" style="left:157px;width:90px;border-radius:3px;padding-left:5px;top:501px;height:20px;line-height:18px"><span id="fget">GET</span></div>
<div class="abs" style="left:230px;top:501px;width:17.500px;height:20px;border-radius:0 4px 4px 0;background:linear-gradient(#4a9bf8,#1a6cf0)"></div>
<svg style="left:234.500px;top:508px" width="9" height="6" viewBox="0 0 9 6"><path d="M1 1l3.500 3.500L8 1" stroke="#fff" stroke-width="1.500" fill="none"/></svg>
<div class="flbl" id="fl2" style="left:261px">Host/port:</div>
<div class="inp" style="left:338px;width:144px"><div style="position:absolute;left:3.500px;right:5px;top:0;height:19px;overflow:hidden"><span id="fhost" style="position:absolute;right:0;font-size:13.200px;letter-spacing:0.26px">http://127.0.0.1:32851</span></div></div>
<div class="flbl" id="fl3" style="left:495px">Path:</div>
<div class="inp" style="left:539.500px;width:610px;padding-left:5px"><span id="fpath">/qa</span></div>
<!-- tabs -->
<div class="rtab" id="rt1" style="left:55px;width:53px;border-left:1px solid #b9b9b9">Request</div>
<div class="rtab" id="rt2" style="left:108px;width:53px">Cookies</div>
<div class="rtab" id="rt3" style="left:161px;width:60px;background:#fff;border-bottom-color:#fff;color:#000">Response</div>
<div class="rtab" id="rt4" style="left:221px;width:108px">Response Headers</div>
<div class="abs" style="left:56px;top:551px;width:1085px;height:4px;background:#fff"></div>
<div class="abs" style="left:56px;top:555px;width:1085px;height:2px;background:#b9b9b9"></div>
<!-- inner toolbar -->
<div class="abs" style="left:56px;top:557px;width:30px;height:157px;background:#e8e8e8"></div>
<svg style="left:62px;top:562px" width="17" height="15" viewBox="0 0 17 15"><path d="M1 1.500h10M5.500 5.500h4M7 9.500h4M1 13.500h8.500" stroke="#333" stroke-width="1.100"/><path d="M11 1.500h2.500a1.200 1.200 0 0 1 1.200 1.200v1.600a1.200 1.200 0 0 1-1.200 1.200H12.500" stroke="#2e6fa8" stroke-width="1.200" fill="none"/><path d="M13 3.500L10.500 5.500 13 7.500z" fill="#2e6fa8"/><path d="M4.500 5.500H2.800a1.200 1.200 0 0 0-1.200 1.200v1.600a1.200 1.200 0 0 0 1.200 1.200H3.500" stroke="#2e6fa8" stroke-width="1.200" fill="none"/><path d="M3.300 7.500L5.800 9.500 3.300 11.500z" fill="#2e6fa8"/><path d="M11.500 9.500h2a1.200 1.200 0 0 1 1.200 1.200v1.600a1.200 1.200 0 0 1-1.200 1.200H12.500" stroke="#2e6fa8" stroke-width="1.200" fill="none"/><path d="M13 11.500L10.500 13.500 13 15.500z" fill="#2e6fa8"/></svg>
<svg style="left:63px;top:587.500px" width="14.400" height="14.400" viewBox="0 0 14 14"><circle cx="7" cy="7" r="7" fill="#4fb0e8"/><path d="M2.500 3.500c1.500-1.500 3.500-1 4.500-.5s2.500-.5 3.500.5.500 2.500-.5 3.500-1 2.500-2 3.500-1.200-1.500-1.700-2.500-2.800-.5-3.300-2 .0-1.500-.5-2.500z" fill="#8ed0f3"/></svg>
<svg style="left:62px;top:612px" width="16" height="16"><use href="#i-txt"/></svg>
<svg style="left:63px;top:637px" width="15" height="16" viewBox="0 0 15 16"><path d="M5.500 1h5.500v8H2V4.500z" fill="#b9bec3"/><path d="M5.500 1v3.500H2z" fill="#8e9499"/><rect x="0" y="8.500" width="15" height="7" fill="#7dc36b"/><text x="2" y="14.500" font-family="Liberation Sans,sans-serif" font-size="7" font-weight="bold" fill="#222">H</text></svg>
<svg style="left:63px;top:662px" width="15" height="16" viewBox="0 0 15 16"><path d="M5.500 1h5.500v8H2V4.500z" fill="#b9bec3"/><path d="M5.500 1v3.500H2z" fill="#8e9499"/><rect x="0" y="8.500" width="15" height="7" fill="#f0702d"/><text x="1.500" y="14.500" font-family="Liberation Sans,sans-serif" font-size="7.500" font-weight="bold" fill="#222">&lt;&gt;</text></svg>
<div class="abs" style="left:59px;top:684px;width:23px;height:23px;background:#cfcfcf;border:1px solid #b5b5b5;border-radius:3px"></div>
<svg style="left:63px;top:688px" width="15" height="16" viewBox="0 0 15 16"><path d="M5 0h7v14H1.500V3.500z" fill="#a9b5be"/><path d="M5 0v3.500H1.500z" fill="#7f8b94"/><text x="6.500" y="14.300" font-family="Liberation Sans,sans-serif" font-size="10.500" fill="#1f2a33" style="-webkit-text-stroke:0.3px #1f2a33">{}</text></svg>
<!-- json editor -->
<div id="jsoned" class="abs mono">
  <div class="abs" style="left:0;top:0;width:1055px;height:15px;background:#fffae3"></div>
  <div class="abs" style="left:850px;top:0;width:1px;height:157px;background:#dcdcdc"></div>
  <div class="abs" style="left:0;top:15px;width:5px;height:142px;background:#f2f2f2"></div>
  <div class="abs" style="left:-0.500px;top:0;width:1px;height:157px;background:#cfcfcf"></div>
  <div class="abs" style="left:5px;top:8px;width:1px;height:149px;background:#d9d9d9"></div>
  <div class="abs" style="left:26.700px;top:45px;width:1px;height:88px;background:#e2e2e2"></div>
  <div class="abs" style="left:40.900px;top:75px;width:1px;height:44px;background:#e2e2e2"></div>
  <svg class="fm" style="top:3.8px" width="9" height="11" viewBox="0 0 9 11"><path d="M.500.500h8v6.500L4.500 10.500.500 7z" fill="#fff" stroke="#cfcfcf"/><path d="M2.500 4.500h4" stroke="#bbb"/></svg>
  <svg class="fm" style="top:33.8px" width="9" height="11" viewBox="0 0 9 11"><path d="M.500.500h8v6.500L4.500 10.500.500 7z" fill="#fff" stroke="#cfcfcf"/><path d="M2.500 4.500h4" stroke="#bbb"/></svg>
  <svg class="fm" style="top:63.8px" width="9" height="11" viewBox="0 0 9 11"><path d="M.500.500h8v6.500L4.500 10.500.500 7z" fill="#fff" stroke="#cfcfcf"/><path d="M2.500 4.500h4" stroke="#bbb"/></svg>
  <svg class="fm" style="top:121.8px" width="9" height="11" viewBox="0 0 9 11"><path d="M.500 10.500h8V4L4.500.500.500 4z" fill="#fff" stroke="#cfcfcf"/><path d="M2.500 6.500h4" stroke="#bbb"/></svg>
  <svg class="fm" style="top:136.8px" width="9" height="11" viewBox="0 0 9 11"><path d="M.500 10.500h8V4L4.500.500.500 4z" fill="#fff" stroke="#cfcfcf"/><path d="M2.500 6.500h4" stroke="#bbb"/></svg>
  <div class="jl" style="top:0">{</div>
  <div class="jl" style="top:15px">  <span class="k">"code"</span>: <span class="n">200</span>,</div>
  <div class="jl" style="top:30px">  <span class="k">"data"</span>: {</div>
  <div class="jl" style="top:45px">    <span class="k">"answer"</span>: <span class="s">"Now will play a play song The play.mp3"</span>,</div>
  <div class="jl" style="top:60px">    <span class="k">"audio"</span>: {</div>
  <div class="jl" style="top:75px">      <span class="k">"contentType"</span>: <span class="s">"audio/mpeg"</span>,</div>
  <div class="jl" style="top:90px">      <span class="k">"name"</span>: <span class="s">"The play.mp3"</span>,</div>
  <div class="jl" style="top:105px">      <span class="k">"url"</span>: <span class="s">"http://127.0.0.1:32851/files/5ad43e6da4bc71fa65bb1159/The play.mp3"</span></div>
  <div class="jl" style="top:120px">    }</div>
  <div class="jl" style="top:135px">  },</div>
  <div class="jl" style="top:150px">  <span class="k">"message"</span>: <span class="s">"generate answer ok"</span>,</div>
</div>
<div class="abs" style="left:56px;top:714px;width:1085px;height:15px;background:#bdbdbd"></div>
<div class="abs nw" id="rstat" style="left:56.800px;top:715px;font-size:12px;line-height:14px;color:#111">Response code: 200 (OK); Time: 358ms; Content length: 299 bytes</div>
<style>
#bottomstrip{left:0;top:729px;width:1141px;height:23px;background:#e8e8e8;border-top:0;border-bottom:1px solid #cfcfcf}
#statusbar{left:0;top:752px;width:1141px;height:21px;background:#ececec}
.bt{position:absolute;top:4.700px;font-size:12.500px;line-height:15px;white-space:nowrap;color:#1d1d1d}
.st{position:absolute;top:4.500px;font-size:12px;line-height:14px;white-space:nowrap;color:#222}
</style>
<div id="bottomstrip" class="abs">
  <div class="abs" style="left:301px;top:0.500px;width:100.500px;height:22px;background:#ababab"></div>
  <svg style="left:25px;top:4px" width="14" height="14" viewBox="0 0 14 14"><circle cx="8" cy="6" r="4" fill="#f1c48b"/><path d="M3 14c0-3 2-4.500 5-4.500s5 1.500 5 4.500z" fill="#3f86c8"/><path d="M4 5c0-3 8-3 8 0z" fill="#555"/><circle cx="3" cy="3" r="2.500" fill="#ddd" stroke="#666" stroke-width=".8"/></svg>
  <div class="bt" id="bt1" style="left:43.500px"><u>6</u>: TODO</div>
  <svg style="left:110px;top:3px" width="14" height="15" viewBox="1 1 14 14"><path d="M7.800 1C5.500 1 4.600 1.800 4.600 3v1.800h3.500v.6H3.200C1.800 5.400 1 6.500 1 8.200s.8 2.800 2.200 2.800h1.200V9.200c0-1.300 1-2.300 2.300-2.300h3.300c1 0 1.800-.8 1.800-1.800V3c0-1.200-1.200-2-4-2z" fill="#4b97d2"/><path d="M11.800 5.200v1.700c0 1.400-1 2.400-2.300 2.400H6.200c-1 0-1.800.8-1.800 1.800V13c0 1.200 1.200 2 3.600 2s3.800-.8 3.800-2v-1.600H8.300v-.6h5c1.300 0 2-1.100 2-2.800s-.7-2.800-2-2.800z" fill="#fbc92d"/></svg>
  <div class="bt" id="bt2" style="left:127px">Python Console</div>
  <svg style="left:229px;top:5px" width="14" height="13" viewBox="0 0 14 13"><rect x=".600" y=".600" width="12.800" height="11.800" fill="#e4e4e4" stroke="#444" stroke-width="1.200"/><rect x="2.500" y="3.500" width="9" height="7" fill="#444"/><path d="M4 5.500l2 1.500-2 1.500" stroke="#fff" stroke-width=".9" fill="none"/><path d="M7 9h3" stroke="#fff" stroke-width=".9"/></svg>
  <div class="bt" id="bt3" style="left:246.500px">Terminal</div>
  <svg style="left:312px;top:4px" width="14" height="15" viewBox="0 0 14 15"><circle cx="8" cy="5.500" r="4" fill="#f1c48b"/><path d="M3.500 5c0-5 9-5 9 0-1.500-1.500-7.500-1.500-9 0z" fill="#8a5a2b"/><path d="M3 15c0-3.500 2-5 5-5s5 1.500 5 5z" fill="#eee" stroke="#999" stroke-width=".6"/><circle cx="3.500" cy="11.500" r="2.600" fill="#e6c029" stroke="#444" stroke-width=".9"/></svg>
  <div class="bt" id="bt4" style="left:329.500px">REST Client</div>
  <svg style="left:1114px;top:4px" width="17" height="16" viewBox="0 0 17 16"><path d="M8 1.200a6.800 6.300 0 1 0 3.500 11.700l3.500 1.300-1.300-3.200A6.800 6.300 0 0 0 8 1.200z" fill="#f4f4f4" stroke="#555" stroke-width="1.100"/></svg>
  <div class="bt" style="left:1134.500px;font-size:10.800px;letter-spacing:0.25px">Event Log</div>
</div>
<div id="statusbar" class="abs">
  <div class="abs" style="left:0;top:20px;width:1141px;height:1px;background:#c8c8c8"></div>
  <div class="abs" style="left:0;top:4px;width:14px;height:12px;background:#c9c9c9;border:1.500px solid #4a4a4a;border-left:0"></div>
  <div class="st" id="st1" style="left:999px">31 chars</div>
  <div class="st" id="st2" style="left:1057.500px">7:53</div>
  <div class="st" id="st3" style="left:1092px">LF</div>
  <svg style="left:1106px;top:7px" width="5" height="9" viewBox="0 0 5 9"><path d="M0 3.500L2.500.500 5 3.500zM0 5.500L2.500 8.500 5 5.500z" fill="#333"/></svg>
  <div class="st" id="st4" style="left:1121px;font-size:10.900px;letter-spacing:0.25px">UTF-8</div>
</div>
</body>
</html>
